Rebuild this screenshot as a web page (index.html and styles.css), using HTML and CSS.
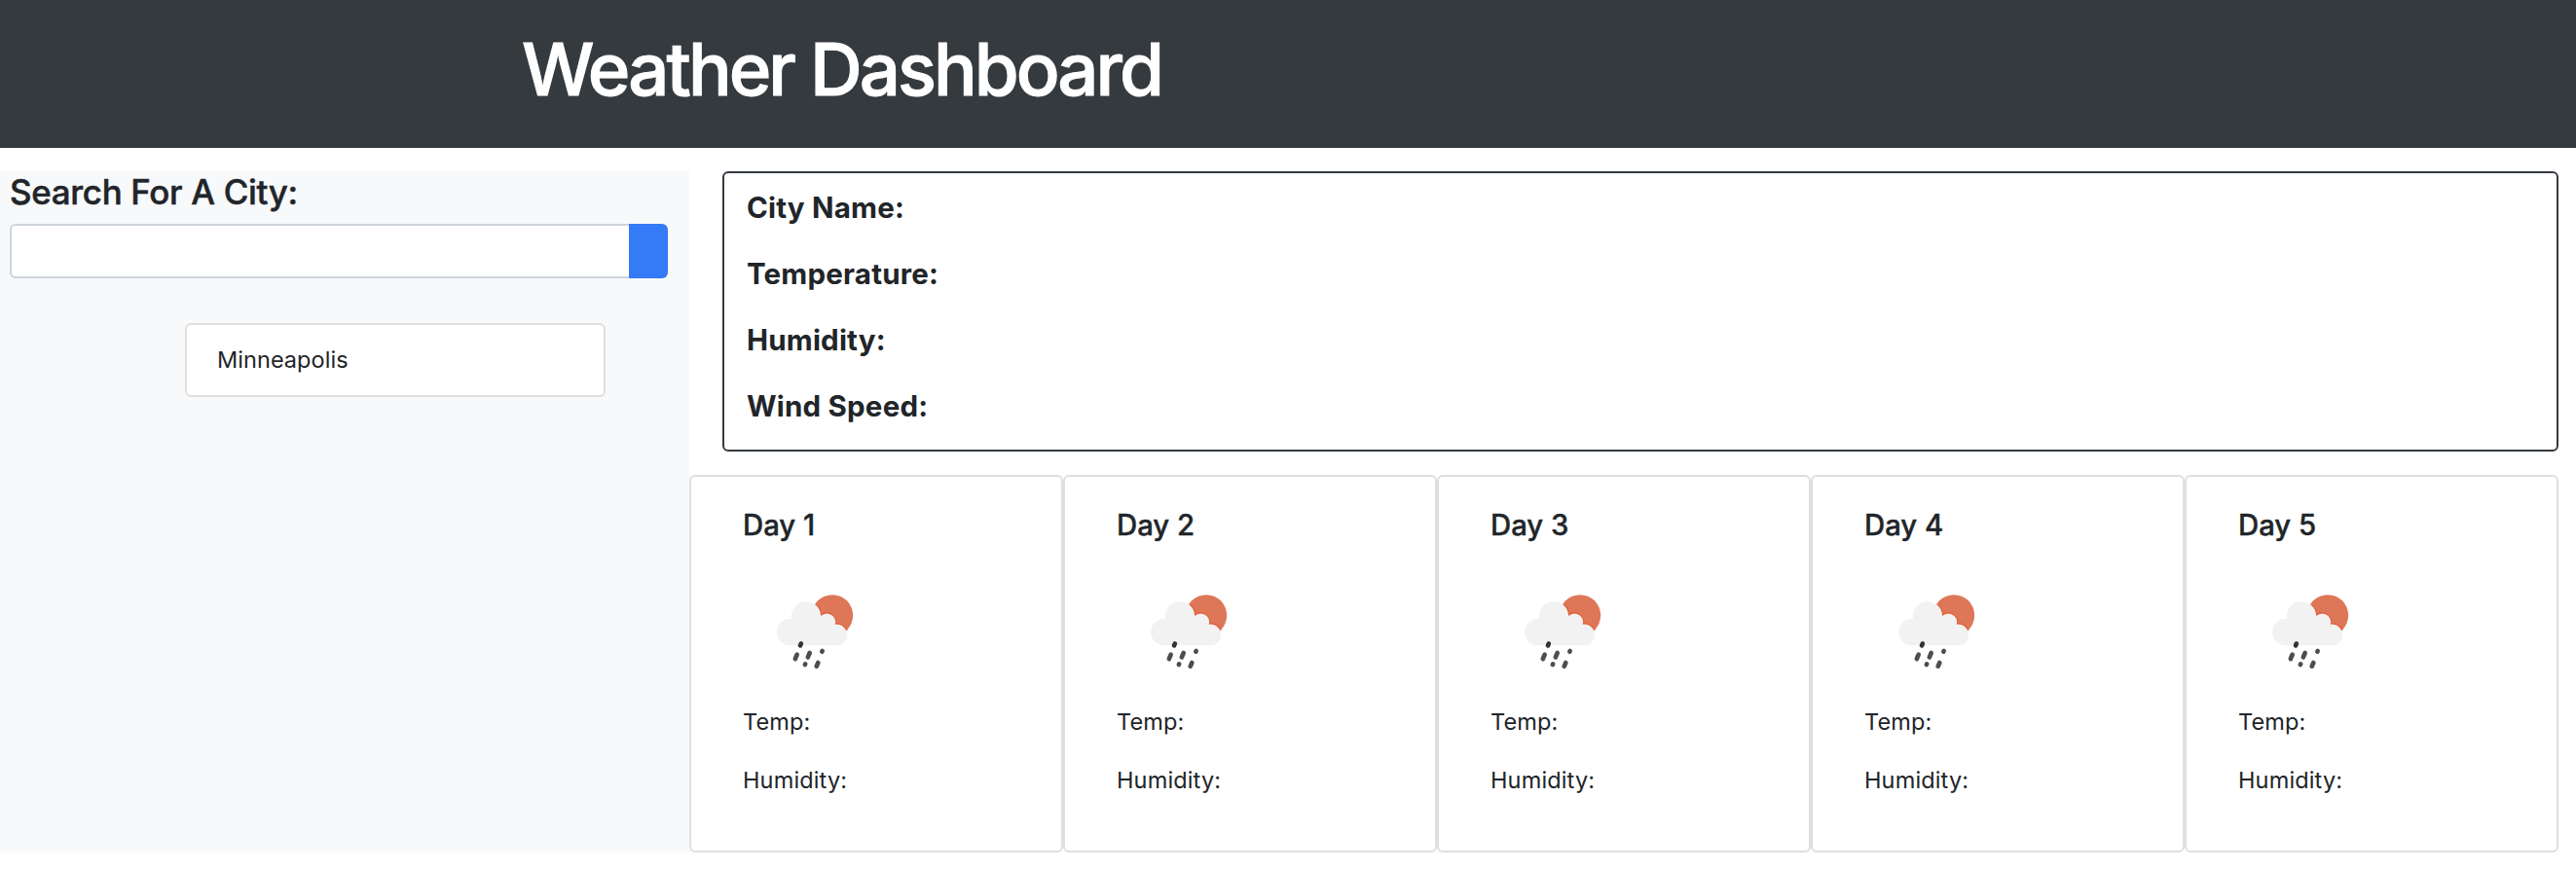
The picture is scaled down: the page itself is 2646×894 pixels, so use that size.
FILE: index.html
```html
<!DOCTYPE html>
<html lang="en">
<head>
<meta charset="utf-8">
<title>Weather Dashboard</title>
<link rel="stylesheet" href="styles.css">
</head>
<body>
<svg class="defs" width="0" height="0" aria-hidden="true">
  <symbol id="rain" viewBox="219 312 450 450">
    <circle cx="495" cy="487" r="63.500" fill="#dd7757"/>
    <g fill="none" stroke="#e2603f" stroke-width="5">
      <path d="M446 455A47 47 0 0 1 460 486"/>
      <path d="M460 486A28 28 0 0 1 504 516"/>
      <path d="M504 514A34 34 0 0 1 540 533"/>
    </g>
    <g fill="#f2f2f2">
      <circle cx="365.500" cy="538.500" r="41"/><circle cx="414" cy="490" r="45.500"/>
      <circle cx="478" cy="508" r="26.500"/><circle cx="508" cy="547" r="32.500"/>
      <path d="M365 500L414 480L478 500L508 540V579.500H365z"/>
    </g>
    <g stroke="#4d4d4d" stroke-width="14" stroke-linecap="round">
      <path d="M398.500 574L396 580" stroke="#333"/>
      <path d="M386 608L380.500 621"/><path d="M425 603L419.500 616"/>
      <path d="M411.500 637L410.500 639"/><path d="M464 596.500L463 599"/>
      <path d="M451 633L446 644"/>
    </g>
  </symbol>
</svg>
<header class="header"><h1 class="title">Weather Dashboard</h1></header>
<div class="layout">
  <aside class="sidebar">
    <h4 class="search-title">Search For A City:</h4>
    <div class="search">
      <input class="search-input" type="text" aria-label="City">
      <button class="search-button" type="button" aria-label="Search"></button>
    </div>
    <div class="city">Minneapolis</div>
  </aside>
  <main class="main">
    <section class="current">
      <p class="stat">City Name:</p>
      <p class="stat">Temperature:</p>
      <p class="stat">Humidity:</p>
      <p class="stat">Wind Speed:</p>
    </section>
    <section class="forecast">
      <article class="day"><h5 class="day-title">Day 1</h5><svg class="icon"><use href="#rain"/></svg><p class="temp">Temp:</p><p class="humidity">Humidity:</p></article>
      <article class="day"><h5 class="day-title">Day 2</h5><svg class="icon"><use href="#rain"/></svg><p class="temp">Temp:</p><p class="humidity">Humidity:</p></article>
      <article class="day"><h5 class="day-title">Day 3</h5><svg class="icon"><use href="#rain"/></svg><p class="temp">Temp:</p><p class="humidity">Humidity:</p></article>
      <article class="day"><h5 class="day-title">Day 4</h5><svg class="icon"><use href="#rain"/></svg><p class="temp">Temp:</p><p class="humidity">Humidity:</p></article>
      <article class="day"><h5 class="day-title">Day 5</h5><svg class="icon"><use href="#rain"/></svg><p class="temp">Temp:</p><p class="humidity">Humidity:</p></article>
    </section>
  </main>
</div>
</body>
</html>
```
FILE: styles.css
```css
* { box-sizing: border-box; }
body { margin: 0; background: #fff; color: #212529; font: 400 23.5px/36px Inter, sans-serif; letter-spacing: 0.15px; }
h1, h4, h5, p { margin: 0; }
.defs { display: none; }
.header { height: 152px; padding: 26px 0 0 536px; background: #353a3e; color: #fff; }
.title { font-size: 74.3px; font-weight: 500; line-height: 90px; letter-spacing: -2.95px; -webkit-text-stroke: 1px #fff; }
.layout { display: grid; grid-template-columns: 708px 1920px; margin-top: 24px; height: 700px; }
.sidebar { padding: 0 22px 0 10px; background: #f8f9fb; }
.search-title { font-size: 34.9px; font-weight: 500; line-height: 43px; margin-bottom: 11px; letter-spacing: -0.3px; -webkit-text-stroke: 0.5px #212529; }
.search { display: flex; height: 56px; }
.search-input { flex: 1; border: 2px solid #ced4da; border-right: 0; border-radius: 6px 0 0 6px; background: #fff; padding: 0 18px; font: inherit; }
.search-button { width: 40px; border: 0; border-radius: 0 6px 6px 0; background: #357af6; }
.city { width: 432px; height: 76px; margin: 46px 0 0 180px; padding: 18px 31px; border: 2px solid #dfdfdf; border-radius: 6px; background: #fff; letter-spacing: 0.05px; }
.current { height: 288px; margin: 0 0 24px 34px; padding: 17px 23px; border: 2px solid #343a40; border-radius: 6px; }
.stat { font-size: 29.5px; font-weight: 700; line-height: 36px; margin-bottom: 32px; letter-spacing: 0.2px; }
.forecast { display: grid; grid-template-columns: repeat(5, 384px); height: 388px; }
.day { border: 2px solid #dfdfdf; border-radius: 6px; padding: 32px 0 0 53px; }
.day-title { font-size: 29.3px; font-weight: 500; line-height: 36px; margin-bottom: 16px; letter-spacing: 0; -webkit-text-stroke: 0.4px #212529; }
.icon { display: block; width: 150px; height: 150px; }
.humidity { margin-top: 24px; }
```
